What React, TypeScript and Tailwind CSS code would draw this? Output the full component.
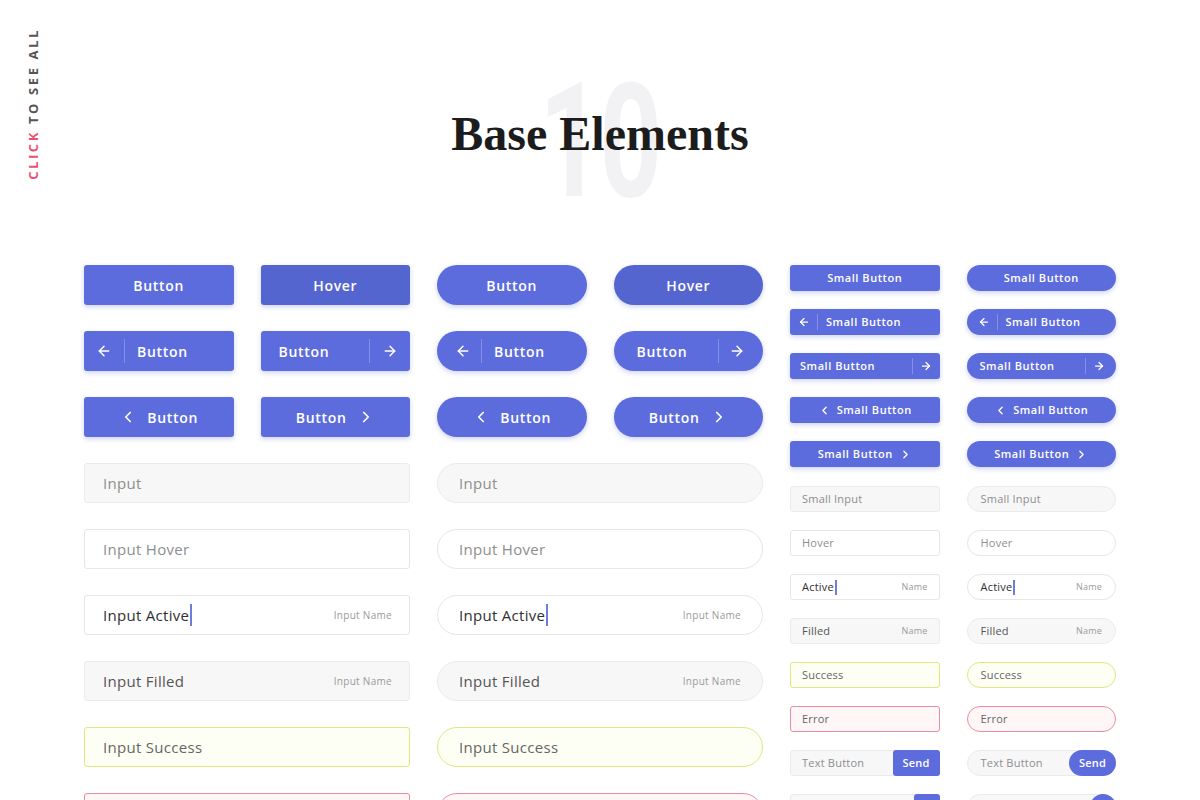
import { ArrowLeft, ArrowRight, ChevronLeft, ChevronRight, Search } from "lucide-react";
import type { ReactNode } from "react";

const sans = "font-['Open_Sans',sans-serif]";

type Shape = "rect" | "pill";

function Btn({ shape, small, hover, children }: { shape: Shape; small?: boolean; hover?: boolean; children: ReactNode }) {
  const radius = shape === "pill" ? "rounded-full" : "rounded-[3px]";
  const size = small ? "h-[26px] text-[11px]" : "h-10 text-[14px]";
  const bg = hover ? "bg-[#5565cf]" : "bg-[#5d6cdc]";
  return (
    <div
      className={`${sans} ${radius} ${size} ${bg} flex w-full items-center font-semibold tracking-[0.05em] text-white shadow-[0_2px_5px_rgba(93,108,220,0.3)]`}
    >
      {children}
    </div>
  );
}

function Divider({ small }: { small?: boolean }) {
  return <span className={`${small ? "h-4" : "h-6"} w-px bg-white/25`} />;
}

function ButtonBlock({ shape }: { shape: Shape }) {
  const pill = shape === "pill";
  return (
    <>
      <div className="grid grid-cols-2 gap-[27px]">
        <Btn shape={shape}>
          <span className="w-full text-center">Button</span>
        </Btn>
        <Btn shape={shape} hover>
          <span className="w-full text-center">Hover</span>
        </Btn>
      </div>
      <div className="grid grid-cols-2 gap-[27px]">
        <Btn shape={shape}>
          <span className={`${pill ? "w-[44px] pl-2" : "w-10"} flex justify-center`}>
            <ArrowLeft size={16} strokeWidth={2.25} />
          </span>
          <Divider />
          <span className="pl-3">Button</span>
        </Btn>
        <Btn shape={shape}>
          <span className={`${pill ? "pl-[23px]" : "pl-[18px]"} flex-1`}>Button</span>
          <Divider />
          <span className={`${pill ? "w-[44px] pr-2" : "w-10"} flex justify-center`}>
            <ArrowRight size={16} strokeWidth={2.25} />
          </span>
        </Btn>
      </div>
      <div className="grid grid-cols-2 gap-[27px]">
        <Btn shape={shape}>
          <span className="flex w-full items-center justify-center gap-2.5">
            <ChevronLeft size={18} strokeWidth={2.25} />
            Button
          </span>
        </Btn>
        <Btn shape={shape}>
          <span className="flex w-full items-center justify-center gap-2.5">
            Button
            <ChevronRight size={18} strokeWidth={2.25} />
          </span>
        </Btn>
      </div>
    </>
  );
}

type State = "default" | "hover" | "active" | "filled" | "success" | "error";

const stateBox: Record<State, string> = {
  default: "bg-[#f7f7f7] border-[#ebebeb]",
  hover: "bg-white border-[#e6e6e6]",
  active: "bg-white border-[#e6e6e6]",
  filled: "bg-[#f7f7f7] border-[#ebebeb]",
  success: "bg-[#fdfff4] border-[#dbeb7d]",
  error: "bg-[#fff6f7] border-[#ea8d9d]",
};

const stateText: Record<State, string> = {
  default: "text-[#8e8e8e]",
  hover: "text-[#8e8e8e]",
  active: "text-[#2f2f2f]",
  filled: "text-[#555]",
  success: "text-[#666]",
  error: "text-[#666]",
};

function Field({ shape, small, state, text, label }: { shape: Shape; small?: boolean; state: State; text: string; label?: string }) {
  const pill = shape === "pill";
  const radius = pill ? "rounded-full" : "rounded-[3px]";
  const size = small ? "h-[26px] text-[11px]" : "h-10 text-[15px]";
  const pad = small ? (pill ? "pl-[13px] pr-[13px]" : "pl-[11px] pr-[11px]") : pill ? "pl-[21px] pr-[21px]" : "pl-[18px] pr-[17px]";
  return (
    <div className={`${sans} ${radius} ${size} ${pad} ${stateBox[state]} flex items-center border tracking-[0.02em]`}>
      <span className={`${stateText[state]} flex items-center`}>
        {text}
        {state === "active" && <span className={`${small ? "h-[15px]" : "h-[22px]"} ml-px w-[2px] bg-[#6f7cdc]`} />}
      </span>
      {label && <span className={`${small ? "text-[9px]" : "text-[10px]"} ml-auto text-[#9a9a9a]`}>{label}</span>}
    </div>
  );
}

function InputBlock({ shape }: { shape: Shape }) {
  return (
    <>
      <Field shape={shape} state="default" text="Input" />
      <Field shape={shape} state="hover" text="Input Hover" />
      <Field shape={shape} state="active" text="Input Active" label="Input Name" />
      <Field shape={shape} state="filled" text="Input Filled" label="Input Name" />
      <Field shape={shape} state="success" text="Input Success" />
      <Field shape={shape} state="error" text="Input Error" />
    </>
  );
}

function SmallColumn({ shape }: { shape: Shape }) {
  const pill = shape === "pill";
  const cell = pill ? "w-[30px]" : "w-[27px]";
  const radius = pill ? "rounded-full" : "rounded-[3px]";
  return (
    <div className="flex flex-col gap-[18px]">
      <Btn shape={shape} small>
        <span className="w-full text-center">Small Button</span>
      </Btn>
      <Btn shape={shape} small>
        <span className={`${cell} flex justify-center ${pill ? "pl-1" : ""}`}>
          <ArrowLeft size={12} strokeWidth={2.5} />
        </span>
        <Divider small />
        <span className="pl-2">Small Button</span>
      </Btn>
      <Btn shape={shape} small>
        <span className={`${pill ? "pl-[13px]" : "pl-[10px]"} flex-1`}>Small Button</span>
        <Divider small />
        <span className={`${cell} flex justify-center ${pill ? "pr-1" : ""}`}>
          <ArrowRight size={12} strokeWidth={2.5} />
        </span>
      </Btn>
      <Btn shape={shape} small>
        <span className="flex w-full items-center justify-center gap-1.5">
          <ChevronLeft size={13} strokeWidth={2.5} />
          Small Button
        </span>
      </Btn>
      <Btn shape={shape} small>
        <span className="flex w-full items-center justify-center gap-1.5">
          Small Button
          <ChevronRight size={13} strokeWidth={2.5} />
        </span>
      </Btn>
      <div className="mt-px flex flex-col gap-[18px]">
        <Field shape={shape} small state="default" text="Small Input" />
        <Field shape={shape} small state="hover" text="Hover" />
        <Field shape={shape} small state="active" text="Active" label="Name" />
        <Field shape={shape} small state="filled" text="Filled" label="Name" />
        <Field shape={shape} small state="success" text="Success" />
        <Field shape={shape} small state="error" text="Error" />
        <div className={`${sans} ${radius} flex h-[26px] items-center border border-[#ebebeb] bg-[#f7f7f7] text-[11px] tracking-[0.02em]`}>
          <span className={`${pill ? "pl-[13px]" : "pl-[11px]"} flex-1 text-[#8e8e8e]`}>Text Button</span>
          <span className={`${radius} -my-px -mr-px flex h-[26px] w-[47px] items-center justify-center bg-[#5d6cdc] font-semibold text-white`}>Send</span>
        </div>
        <div className={`${sans} ${radius} flex h-[26px] items-center border border-[#ebebeb] bg-[#f7f7f7] text-[11px] tracking-[0.02em]`}>
          <span className={`${pill ? "pl-[13px]" : "pl-[11px]"} flex-1 text-[#8e8e8e]`}>Search</span>
          <span className={`${radius} -my-px -mr-px flex h-[26px] w-[26px] items-center justify-center bg-[#5d6cdc] text-white`}>
            <Search size={12} strokeWidth={2.5} />
          </span>
        </div>
      </div>
    </div>
  );
}

export default function App() {
  return (
    <div className="relative min-h-screen overflow-hidden bg-white">
      <div
        className={`${sans} absolute left-[24px] top-[28px] rotate-180 text-[13px] font-bold tracking-[0.2em] text-[#555] [writing-mode:vertical-rl]`}
      >
        <span className="text-[#e9506f]">CLICK</span> TO SEE ALL
      </div>

      <header className="relative flex h-[200px] items-start justify-center pt-[62px]">
        <span className="font-['Roboto',sans-serif] text-[160px] font-bold leading-none tracking-[-0.02em] text-[#f2f2f4] scale-x-[0.68]">
          10
        </span>
        <h1 className="absolute left-0 right-0 top-[110px] text-center font-['Liberation_Serif',serif] text-[48px] font-bold leading-none text-[#1c1c1c]">
          Base Elements
        </h1>
      </header>

      <main className="mx-auto mt-[65px] grid w-[1032px] grid-cols-3 gap-x-[27px]">
        <div className="flex flex-col gap-[26px]">
          <ButtonBlock shape="rect" />
          <InputBlock shape="rect" />
        </div>
        <div className="flex flex-col gap-[26px]">
          <ButtonBlock shape="pill" />
          <InputBlock shape="pill" />
        </div>
        <div className="grid grid-cols-2 gap-x-[27px]">
          <SmallColumn shape="rect" />
          <SmallColumn shape="pill" />
        </div>
      </main>
    </div>
  );
}
